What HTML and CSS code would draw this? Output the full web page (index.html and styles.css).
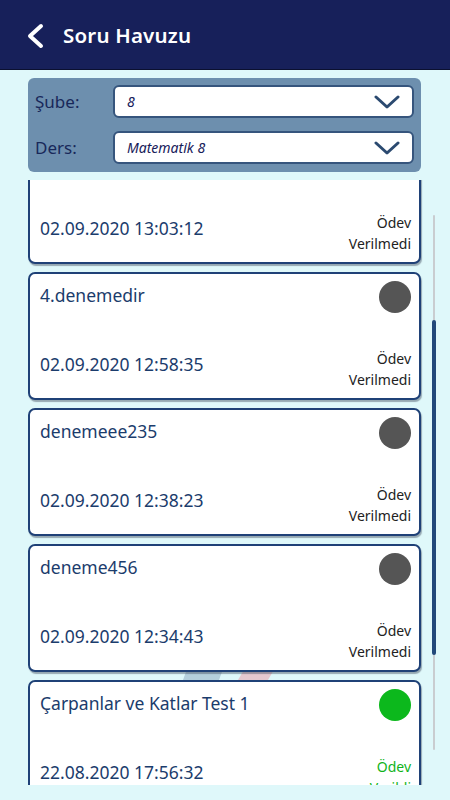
FILE: index.html
```html
<!DOCTYPE html>
<html lang="tr">

<head>
    <meta charset="UTF-8">
    <meta name="viewport" content="width=device-width, initial-scale=1.0">
    <title>Soru Havuzu</title>
    <link rel="stylesheet" href="styles.css">
</head>

<body>
    <div class="topbar">
        <svg class="back" width="20" height="26" viewBox="0 0 20 26">
            <path d="M15 3 L4 13 L15 23" fill="none" stroke="#fff" stroke-width="4" stroke-linecap="round" stroke-linejoin="round" />
        </svg>
        <h1>Soru Havuzu</h1>
    </div>

    <div class="content">
        <div class="filters">
            <div class="filter-row">
                <label>Şube:</label>
                <div class="select">
                    <span>8</span>
                    <svg width="26" height="14" viewBox="0 0 26 14">
                        <path d="M2 2 L13 12 L24 2" fill="none" stroke="#2b4a70" stroke-width="3" stroke-linecap="round" stroke-linejoin="round" />
                    </svg>
                </div>
            </div>
            <div class="filter-row">
                <label>Ders:</label>
                <div class="select">
                    <span>Matematik 8</span>
                    <svg width="26" height="14" viewBox="0 0 26 14">
                        <path d="M2 2 L13 12 L24 2" fill="none" stroke="#2b4a70" stroke-width="3" stroke-linecap="round" stroke-linejoin="round" />
                    </svg>
                </div>
            </div>
        </div>

        <div class="list-wrap">
            <!-- faint logo behind the list -->
            <div class="watermark">
                <span class="mark-blue"></span>
                <span class="mark-red"></span>
            </div>

            <div class="list">
                <!-- list is scrolled down a bit -->
                <div class="list-inner">
                    <div class="card">
                        <div class="card-top">
                            <span class="card-title">3.deneme</span>
                            <span class="dot"></span>
                        </div>
                        <div class="card-bottom">
                            <span class="card-date">02.09.2020 13:03:12</span>
                            <span class="status">Ödev<br>Verilmedi</span>
                        </div>
                    </div>
                    <div class="card">
                        <div class="card-top">
                            <span class="card-title">4.denemedir</span>
                            <span class="dot"></span>
                        </div>
                        <div class="card-bottom">
                            <span class="card-date">02.09.2020 12:58:35</span>
                            <span class="status">Ödev<br>Verilmedi</span>
                        </div>
                    </div>
                    <div class="card">
                        <div class="card-top">
                            <span class="card-title">denemeee235</span>
                            <span class="dot"></span>
                        </div>
                        <div class="card-bottom">
                            <span class="card-date">02.09.2020 12:38:23</span>
                            <span class="status">Ödev<br>Verilmedi</span>
                        </div>
                    </div>
                    <div class="card">
                        <div class="card-top">
                            <span class="card-title">deneme456</span>
                            <span class="dot"></span>
                        </div>
                        <div class="card-bottom">
                            <span class="card-date">02.09.2020 12:34:43</span>
                            <span class="status">Ödev<br>Verilmedi</span>
                        </div>
                    </div>
                    <div class="card">
                        <div class="card-top">
                            <span class="card-title">Çarpanlar ve Katlar Test 1</span>
                            <span class="dot done"></span>
                        </div>
                        <div class="card-bottom">
                            <span class="card-date">22.08.2020 17:56:32</span>
                            <span class="status done">Ödev<br>Verildi</span>
                        </div>
                    </div>
                </div>
            </div>

            <div class="scroll-track"></div>
            <div class="scroll-thumb"></div>
        </div>
    </div>
</body>

</html>
```

FILE: styles.css
```css
body {
    margin: 0;
    font-family: "Noto Sans", "Open Sans", sans-serif;
    background-color: #dff8fa;
    height: 800px;
    overflow: hidden;
}

.topbar {
    height: 69px;
    background-color: #17205a;
    border-bottom: 1px solid #0b1030;
    display: flex;
    align-items: center;
    padding-left: 26px;
    gap: 17px;
}

.topbar .back {
    margin-top: 2px;
}

.topbar h1 {
    margin: 0;
    color: #fff;
    font-size: 20.5px;
    font-weight: 600;
    letter-spacing: 0.2px;
}

.content {
    padding: 8px 0 0 28px;
}

.filters {
    width: 393px;
    box-sizing: border-box;
    background-color: #6d8fae;
    border-radius: 6px;
    padding: 7px 7px 8px 7px;
    display: flex;
    flex-direction: column;
    gap: 13px;
}

.filter-row {
    display: flex;
    align-items: center;
}

.filter-row label {
    width: 78px;
    color: #18285a;
    font-size: 17px;
    line-height: 24px;
}

.select {
    flex: 1;
    height: 33px;
    box-sizing: border-box;
    background-color: #fff;
    border: 2px solid #36557d;
    border-radius: 6px;
    display: flex;
    align-items: center;
    justify-content: space-between;
    padding: 0 12px 0 12px;
}

.select span {
    font-style: italic;
    font-size: 14px;
    line-height: 20px;
    padding-right: 2px;
    color: #17205a;
}

.select svg {
    margin-top: 1px;
}

.list-wrap {
    position: relative;
    margin-top: 8px;
    height: 605px;
}

.list {
    width: 396px;
    height: 605px;
    overflow: hidden;
    position: relative;
}

.list-inner {
    margin-top: -44px;
    display: flex;
    flex-direction: column;
    gap: 8px;
}

.card {
    width: 393px;
    height: 128px;
    box-sizing: border-box;
    background-color: #fff;
    border: 2px solid #1f4177;
    border-radius: 7px;
    box-shadow: 1px 2px 1px rgba(60, 70, 90, 0.45);
    padding: 7px 8px 8px 10px;
    display: flex;
    flex-direction: column;
    justify-content: space-between;
}

.card-top {
    display: flex;
    justify-content: space-between;
    align-items: flex-start;
}

.card-title {
    color: #1b3c6c;
    font-size: 17.5px;
    line-height: 28px;
}

.dot {
    width: 32px;
    height: 32px;
    border-radius: 50%;
    background-color: #555;
}

.dot.done {
    background-color: #0cb81c;
}

.card-bottom {
    display: flex;
    justify-content: space-between;
    align-items: flex-end;
}

.card-date {
    color: #1b3c6c;
    font-size: 17.5px;
    margin-bottom: 14px;
}

.status {
    text-align: right;
    font-size: 14px;
    line-height: 21px;
    color: #222;
}

.status.done {
    color: #11b31a;
}

.watermark {
    position: absolute;
    left: 155px;
    top: 470px;
    width: 120px;
    height: 60px;
}

.mark-blue {
    position: absolute;
    left: 0;
    top: 0;
    width: 36px;
    height: 60px;
    background-color: #b4cfdc;
    transform: skewX(-20deg);
}

.mark-red {
    position: absolute;
    left: 55px;
    top: 0;
    width: 30px;
    height: 60px;
    background-color: #e6c8cf;
    transform: skewX(-30deg);
}

.scroll-track {
    position: absolute;
    left: 405px;
    top: 35px;
    width: 2px;
    height: 535px;
    background-color: #c9cdd0;
    border-radius: 1px;
}

.scroll-thumb {
    position: absolute;
    left: 404px;
    top: 140px;
    width: 4px;
    height: 335px;
    background-color: #22497a;
    border-radius: 2px;
}
```
